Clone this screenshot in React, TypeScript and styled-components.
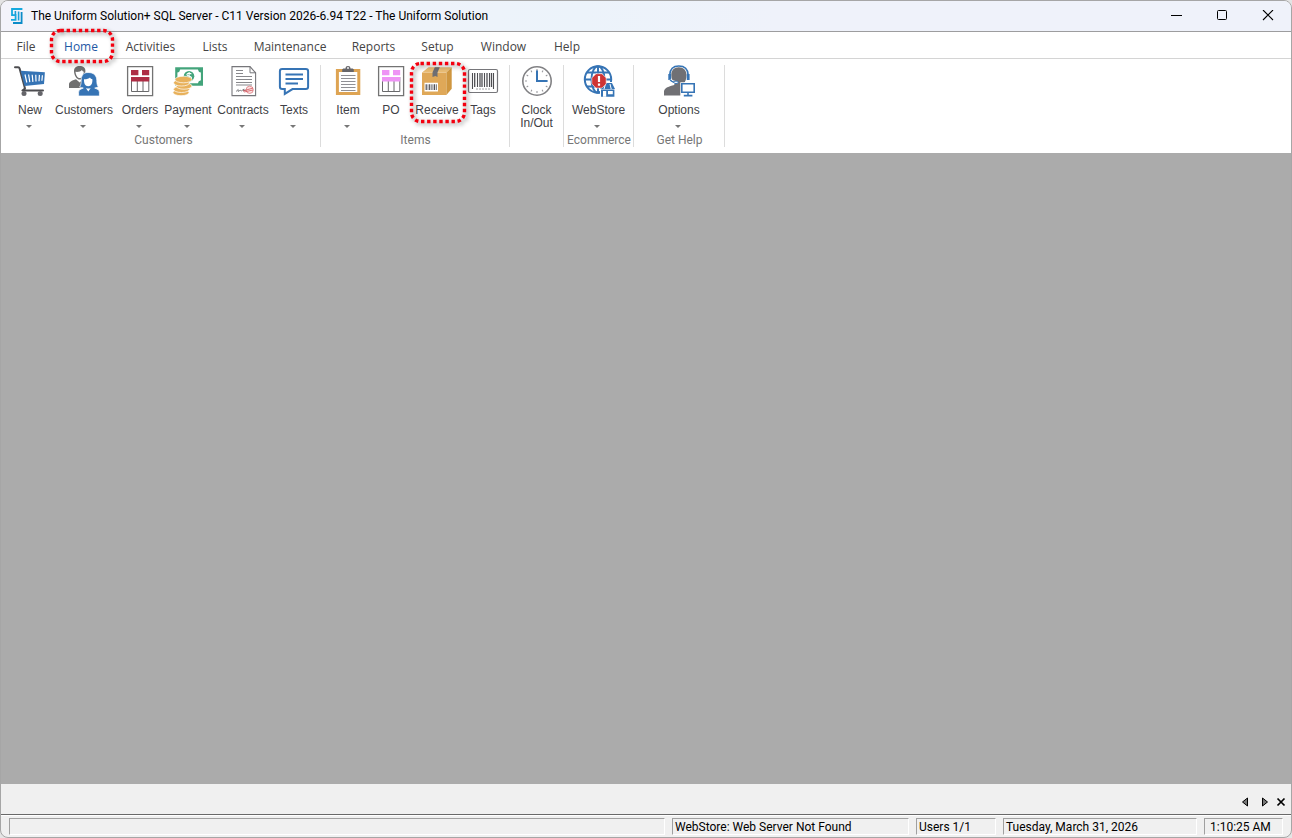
import React from "react";
import styled, { createGlobalStyle } from "styled-components";

const uiFont = `"Open Sans", "Noto Sans", sans-serif`;
const narrowFont = `Roboto, "Open Sans", sans-serif`;

const GlobalStyle = createGlobalStyle`
  *, *::before, *::after { box-sizing: border-box; }
  body { margin: 0; background: #e4e4e4; font-family: ${uiFont}; font-size: 12px; }
  button { margin: 0; padding: 0; border: 0; background: none; color: inherit; font: inherit; }
`;

const Frame = styled.div`
  display: flex;
  flex-direction: column;
  min-height: 100vh;
  border: 1px solid #a6a6a6;
  border-radius: 8px;
  overflow: hidden;
  background: #f0f0f0;
`;

const TitleBar = styled.header`
  display: flex;
  align-items: center;
  height: 31px;
  padding-left: 9px;
  background: linear-gradient(90deg, #f3f3fa, #ecf3fa 45%, #eff2fa 60%);
  border-bottom: 1px solid #9d9d9f;
`;

const Title = styled.h1`
  flex: 1;
  margin: 0 0 0 7px;
  font-family: ${narrowFont};
  font-size: 12px;
  font-weight: 400;
  line-height: 16px;
  color: #000;
  white-space: nowrap;
`;

const CaptionButton = styled.button`
  display: flex;
  align-items: center;
  justify-content: center;
  width: 46px;
  height: 30px;
`;

const MenuBar = styled.nav`
  display: flex;
  height: 27px;
  padding-left: 1px;
  background: #fff;
  border-bottom: 1px solid #d4d4d4;
`;

const MenuTab = styled.button<{ $width: number; $active?: boolean }>`
  position: relative;
  width: ${(p) => p.$width}px;
  height: 30px;
  line-height: 30px;
  white-space: nowrap;
  color: ${(p) => (p.$active ? "#1e58a4" : "#444")};
`;

const Ribbon = styled.section`
  display: flex;
  height: 94px;
  background: #fff;
`;

const Group = styled.div<{ $width: number; $indent?: number }>`
  display: flex;
  flex-direction: column;
  justify-content: space-between;
  width: ${(p) => p.$width}px;
  margin: 6px 0;
  padding-left: ${(p) => p.$indent ?? 0}px;
  border-right: 1px solid #dcdcdc;
`;

const GroupButtons = styled.div`
  display: flex;
  justify-content: center;
`;

const GroupName = styled.div`
  height: 15px;
  line-height: 16px;
  padding-left: 1px;
  text-align: center;
  font-family: ${narrowFont};
  color: #767676;
`;

const Tool = styled.button<{ $width: number }>`
  position: relative;
  display: flex;
  flex-direction: column;
  align-items: center;
  width: ${(p) => p.$width}px;
  font-family: "Liberation Sans", Arial, sans-serif;
  font-size: 12px;
  line-height: 13px;
  color: #3f3f46;
`;

const ToolLabel = styled.span`
  position: relative;
  z-index: 2;
  margin-top: 7px;
  white-space: nowrap;
`;

const DropMark = styled.span`
  margin: 8px 3px 0 0;
  border: 3px solid transparent;
  border-top-color: #777;
  border-bottom: 0;
`;

const CalloutSvg = styled.svg<{ $inset: string }>`
  position: absolute;
  z-index: 1;
  inset: ${(p) => p.$inset};
  overflow: visible;
  pointer-events: none;
  filter: drop-shadow(2px 2px 2px rgba(0, 0, 0, 0.45));
`;

const Workspace = styled.main`
  flex: 1;
  background: #ababab;
`;

const WindowStrip = styled.div`
  display: flex;
  justify-content: flex-end;
  align-items: flex-end;
  height: 31px;
  padding: 0 4px 5px 0;
  background: #f0f0f0;
  border-bottom: 1px solid #696969;
`;

const StripButton = styled.button<{ $width: number }>`
  display: flex;
  align-items: center;
  justify-content: center;
  width: ${(p) => p.$width}px;
  height: 14px;
`;

const StatusBar = styled.footer`
  display: grid;
  grid-template-columns: 1fr 237px 80px 194px 79px;
  gap: 7px;
  padding: 2px 8px;
  border-top: 1px solid #fff;
`;

const StatusCell = styled.div<{ $indent?: number }>`
  height: 17px;
  padding-left: ${(p) => p.$indent ?? 2}px;
  border: 1px solid #a0a0a0;
  border-right-color: #fff;
  border-bottom-color: #fff;
  font-family: ${narrowFont};
  line-height: 16px;
  color: #000;
  white-space: nowrap;
`;

function Callout({ width, height, inset }: { width: number; height: number; inset: string }) {
  return (
    <CalloutSvg $inset={inset} width={width} height={height} aria-hidden="true">
      <rect
        x="1.5"
        y="1.5"
        width={width - 3}
        height={height - 3}
        rx="9"
        fill="none"
        stroke="#f4000f"
        strokeWidth="3.4"
        strokeDasharray="3.4 2.7"
      />
    </CalloutSvg>
  );
}

function Icon({ children }: { children: React.ReactNode }) {
  return (
    <svg width="32" height="32" viewBox="0 0 32 32" fill="none" aria-hidden="true">
      {children}
    </svg>
  );
}

const CartIcon = () => (
  <Icon>
    <path d="M1 2.2h3.2c.8 0 1.2.5 1.4 1.2L11 23.5l-2.6 2H29" stroke="#4d4d50" strokeWidth="2" strokeLinejoin="round" strokeLinecap="round" />
    <path d="M6.6 5.8 30.9 7.2 30 19 10.6 21Z" fill="#3674b5" />
    <path d="m11 9.5 1.8 8M14.6 9.5l1.2 7.7M18.2 9.7l.7 7.2M21.8 9.8l.2 6.8M25.4 9.9 25 16.2M28.4 10.2l-.5 5.6" stroke="#fff" strokeWidth="1.2" />
    <circle cx="10" cy="28.5" r="2.5" fill="#65656a" />
    <circle cx="26.2" cy="28.5" r="2.5" fill="#65656a" />
  </Icon>
);

const CustomersIcon = () => (
  <Icon>
    <path d="M6 6C6 2.8 8.3 1 11.7 1s5.7 1.8 5.7 5c0 4-2.4 8.6-5.7 8.6S6 10 6 6Z" fill="#707070" />
    <path d="M7.5 6.8c2.8.4 5.3-.4 6.5-1.8.4 1 .9 1.5 1.8 1.8-.2 3-1.8 6.3-4.1 6.3S7.8 10 7.5 6.8Z" fill="#fff" />
    <path d="M1 23v-3.5c0-2.6 2.7-3.7 7-5.2l3.7 3.3L14 15v8Z" fill="#707070" />
    <path d="M20 7.5c-5 0-6.8 3.4-6.8 8 0 3-.4 4.7-1.6 6.6l3.7 1c-2 .9-4.7 1.5-4.7 4.4V31h20.8v-3.5c0-2.9-2.6-3.5-4.7-4.4l3.7-1c-1.2-1.9-1.6-3.6-1.6-6.6 0-4.6-2.8-8-8.8-8Z" fill="#3674b5" stroke="#fff" strokeWidth=".7" />
    <path d="M16 14.2c3 0 5-.6 6-1.8.6 1.1 1.2 1.5 2.4 1.8.2 3.8-1 7-4.2 7s-4.4-3.2-4.2-7ZM17.8 23c1.5.8 3.4.8 4.9 0l-2.4 3.6Z" fill="#fff" />
  </Icon>
);

const FormIcon = ({ color }: { color: string }) => (
  <Icon>
    <path d="M3.6 1.6h25v29h-25Z" fill="#fff" stroke="#737373" strokeWidth="1.3" />
    <path d="M7.5 12v14.5h17.3V12M13.3 14v12.5M19 14v12.5" stroke="#69696b" strokeWidth="1" />
    <path d="M7 5h7.4v5.2H7ZM18 5h7.2v5.2H18ZM7 12h18.2v4.5H7Z" fill={color} />
  </Icon>
);

const PaymentIcon = () => (
  <Icon>
    <path d="M3.2 2.2H31v18.6H3.2Z" fill="#43a47b" />
    <path d="M8.2 4.5h17.7a3.5 3.5 0 0 0 3 3v7.7a3.5 3.5 0 0 0-3 3H8.4a3.5 3.5 0 0 0-3-3V7.5a3.5 3.5 0 0 0 2.8-3Z" fill="#fff" />
    <circle cx="17" cy="11.3" r="5.3" fill="#43a47b" />
    <path d="M19.3 9.2c-.5-1.1-4.4-1.4-4.4.5 0 1.7 4.6 1 4.6 3.1 0 2-4.2 1.7-4.8.4M17.1 7v8.7" stroke="#fff" strokeWidth="1.1" />
    <g fill="#e8b15b" stroke="#fff" strokeWidth=".7">
      <ellipse cx="9" cy="27.5" rx="8" ry="3.2" />
      <ellipse cx="9.5" cy="24.3" rx="8" ry="3.2" />
      <ellipse cx="12" cy="21" rx="8" ry="3.2" />
      <ellipse cx="9.5" cy="17.8" rx="8" ry="3.2" />
      <ellipse cx="11.5" cy="14.5" rx="8.5" ry="3.3" />
    </g>
  </Icon>
);

const ContractIcon = () => (
  <Icon>
    <path d="M5 1.6h18l5.6 6.2v22.8H5Z" fill="#fff" stroke="#76767a" strokeWidth="1.1" />
    <path d="M23 1.6v6.2h5.6" stroke="#76767a" />
    <path d="M9 5.5h7M9 8.5h7M9 11.5h16M9 14.5h16M9 17.5h16M9 20h16" stroke="#88888c" strokeWidth="1.2" />
    <path d="m9 26.5 2.2-2v2l2-1.3 1 .8 3-2-1 2 3-1 4 .5" stroke="#77777b" strokeWidth=".9" />
    <circle cx="22.7" cy="24.8" r="3.6" fill="#fbe2e2" stroke="#dc7b80" strokeWidth=".8" />
    <path d="m16 26 10-3M17 27l9-2" stroke="#d6545c" strokeWidth=".8" />
  </Icon>
);

const TextsIcon = () => (
  <Icon>
    <path d="M4.2 3.9h23.6c1.3 0 2.3 1 2.3 2.3v15.6c0 1.3-1 2.3-2.3 2.3H14.5l-7.7 4.8v-4.8H4.2c-1.3 0-2.3-1-2.3-2.3V6.2c0-1.3 1-2.3 2.3-2.3Z" fill="#fff" stroke="#3674b5" strokeWidth="2" />
    <path d="M7.5 9.5H25M7.5 14H25M7.5 18.5H20" stroke="#3674b5" strokeWidth="2" />
  </Icon>
);

const ClipboardIcon = () => (
  <Icon>
    <path d="M5.4 5.4h21.4v23.2H5.4Z" fill="#fff" stroke="#dea453" strokeWidth="3" />
    <path d="M9 10.5h14.5M9 13.5h14.5M9 16.5h14.5M9 19.5h14.5M9 22.5h14.5M9 25.5h14.5" stroke="#909095" strokeWidth="1.1" />
    <path d="M10.2 7V5c0-1 .7-1.5 1.8-1.5h1.5C13.5 1.8 14.5 1 16 1s2.5.8 2.5 2.5H20c1.1 0 1.8.5 1.8 1.5v2Z" fill="#66666a" />
    <circle cx="16" cy="3" r=".9" fill="#fff" />
  </Icon>
);

const BoxIcon = () => (
  <Icon>
    <path d="M1 7.4h24.4V30H1Z" fill="#dfa858" />
    <path d="M1 7.4 7.5 2.2h23.2l-5.3 5.2Z" fill="#e9bc75" />
    <path d="m25.4 7.4 5.3-5.2v21.5L25.4 30Z" fill="#cf963f" />
    <path d="M13.8 2.2h5l-2.3 5.2v4.6l-2.1-1-2.9 1V7.4Z" fill="#6e6e73" />
    <path d="M3.5 17.8H17v8.7H3.5Z" fill="#fff" />
    <path d="M5.2 19.3v5.7M8.7 19.3v5.7M13.6 19.3v5.7" stroke="#515156" strokeWidth="1.2" />
    <path d="M7 19.3v5.7M10.7 19.3v5.7M12 19.3v5.7M15.5 19.3v5.7" stroke="#515156" strokeWidth=".7" />
  </Icon>
);

const BarcodeIcon = () => (
  <Icon>
    <rect x="1.5" y="4.5" width="29" height="23" rx="1.5" fill="#fff" stroke="#76767a" strokeWidth="1.2" />
    <path d="M5.5 8v16M10.5 8v14M17.5 8v14M22.5 8v14M26.5 8v16" stroke="#4e4e52" strokeWidth="1.1" />
    <path d="M7.7 8v14M13 8v14M15 8v14M20 8v14M24.5 8v14" stroke="#4e4e52" strokeWidth="1.3" />
    <path d="M9 24h14" stroke="#a2a2a5" strokeWidth="1" strokeDasharray="2 1" />
  </Icon>
);

const ClockIcon = () => (
  <Icon>
    <circle cx="16" cy="16" r="14.2" fill="#fff" stroke="#818184" strokeWidth="1.6" />
    <path d="M16 4v2M16 26v2M4 16h2M10 5.6l.9 1.6M5.6 10l1.6.9M5.6 22l1.6-.9M10 26.4l.9-1.6M22 26.4l-.9-1.6M26.4 22l-1.6-.9M26.4 10l-1.6.9M22 5.6l-.9 1.6" stroke="#9a9a9e" strokeWidth="1.1" />
    <path d="M16 5.5V16h10.6" stroke="#3674b5" strokeWidth="2" />
  </Icon>
);

const WebStoreIcon = () => (
  <Icon>
    <g stroke="#3674b5" strokeWidth="2">
      <circle cx="15" cy="14.5" r="13.2" />
      <ellipse cx="15" cy="14.5" rx="6.5" ry="13.2" />
      <path d="M2 14.5h26M4 7.5h22M4 21.5h22M15 1.3v26" />
    </g>
    <path d="M16 24.6 19.5 17h9.5l3 7.6V32H17v-7.4Z" fill="#fff" />
    <path d="m17 24 3.5-6h8.5l3 6ZM18 24.5h13.4v7.3H18Z" fill="#3674b5" />
    <path d="m22.5 19-1.5 5M27 19l1.2 5" stroke="#fff" strokeWidth="1" />
    <path d="M20 26h3.2v5.8H20ZM25 26h4.8v3.2H25Z" fill="#fff" />
    <path d="M13 8.7h6l4.2 4.2v6l-4.2 4.2h-6l-4.2-4.2v-6Z" fill="#cf3434" stroke="#fff" strokeWidth=".6" />
    <path d="M16 11v6M16 18.6v2.2" stroke="#fff" strokeWidth="2.2" />
  </Icon>
);

const SupportIcon = () => (
  <Icon>
    <path d="M8.3 10c0-4.8 2.9-7.7 7.5-7.7s7.7 2.9 7.7 7.7c0 4-1 7-3.3 9l.3 2c3.5 1.4 8 2 8.6 5.6v3.8H1v-4.2C1.6 22.7 6 21.5 11.3 20v-2C9.2 16 8.3 13.5 8.3 10Z" fill="#707074" />
    <path d="M6.7 10C7 4.5 10 1 15.8 1S24.9 4.5 25.2 10" stroke="#3674b5" strokeWidth="1.6" />
    <path d="M6.7 9v6M25.2 9v6" stroke="#3674b5" strokeWidth="2.8" />
    <path d="M7 14.5c1 2 2.8 2.8 5.5 3" stroke="#fff" strokeWidth="3" />
    <path d="M7 14.5c1 2 2.8 2.8 5.5 3" stroke="#3674b5" strokeWidth="1.4" />
    <ellipse cx="13" cy="17.3" rx="2.2" ry="1.2" fill="#fff" stroke="#3674b5" />
    <path d="M17.3 17.3H32V32H17.3Z" fill="#fff" />
    <path d="M18.8 18.8h12.4v8.4H18.8ZM25 27.2v2.6M20.8 30.6h8.6" stroke="#3674b5" strokeWidth="1.6" />
  </Icon>
);

const AppLogo = () => (
  <svg width="14" height="18" viewBox="0 0 14 18" fill="none" aria-hidden="true">
    <path d="M12.4 2H2v6.2h3.6v4.6H1" stroke="#16a9de" strokeWidth="1.8" />
    <path d="M3 16h8.6V5" stroke="#0c8cc8" strokeWidth="1.8" />
    <path d="M5.4 4v4M8.6 4.6v9" stroke="#1c9fd8" strokeWidth="1.6" />
  </svg>
);

type ToolSpec = { label: React.ReactNode; icon: React.ReactNode; width: number; menu?: boolean; marked?: boolean };

const groups: { name: string; width: number; indent?: number; tools: ToolSpec[] }[] = [
  {
    name: "Customers",
    width: 320,
    indent: 5,
    tools: [
      { label: "New", icon: <CartIcon />, width: 40, menu: true },
      { label: "Customers", icon: <CustomersIcon />, width: 68, menu: true },
      { label: "Orders", icon: <FormIcon color="#ad2c44" />, width: 44, menu: true },
      { label: "Payment", icon: <PaymentIcon />, width: 52, menu: true },
      { label: "Contracts", icon: <ContractIcon />, width: 58, menu: true },
      { label: "Texts", icon: <TextsIcon />, width: 44, menu: true },
    ],
  },
  {
    name: "Items",
    width: 189,
    tools: [
      { label: "Item", icon: <ClipboardIcon />, width: 44, menu: true },
      { label: "PO", icon: <FormIcon color="#ee93f5" />, width: 42 },
      { label: "Receive", icon: <BoxIcon />, width: 50, marked: true },
      { label: "Tags", icon: <BarcodeIcon />, width: 42 },
    ],
  },
  { name: "", width: 54, tools: [{ label: <>Clock<br />In/Out</>, icon: <ClockIcon />, width: 50 }] },
  { name: "Ecommerce", width: 70, tools: [{ label: "WebStore", icon: <WebStoreIcon />, width: 66, menu: true }] },
  { name: "Get Help", width: 91, tools: [{ label: "Options", icon: <SupportIcon />, width: 66, menu: true }] },
];

const tabs: [string, number][] = [
  ["File", 48],
  ["Home", 62],
  ["Activities", 77],
  ["Lists", 52],
  ["Maintenance", 98],
  ["Reports", 69],
  ["Setup", 59],
  ["Window", 73],
  ["Help", 54],
];

export default function App() {
  return (
    <>
      <GlobalStyle />
      <Frame>
        <TitleBar>
          <AppLogo />
          <Title>The Uniform Solution+ SQL Server - C11 Version 2026-6.94 T22 - The Uniform Solution</Title>
          <CaptionButton aria-label="Minimize">
            <svg width="12" height="12" stroke="#000"><path d="M1 5.5h11" /></svg>
          </CaptionButton>
          <CaptionButton aria-label="Maximize">
            <svg width="12" height="12" fill="none" stroke="#000"><rect x="1.5" y="0.5" width="9" height="9" rx="1" /></svg>
          </CaptionButton>
          <CaptionButton aria-label="Close">
            <svg width="12" height="12" stroke="#000" strokeWidth="1.1"><path d="m1 0 10 10M11 0 1 10" /></svg>
          </CaptionButton>
        </TitleBar>
        <MenuBar>
          {tabs.map(([name, width]) => (
            <MenuTab key={name} $width={width} $active={name === "Home"}>
              {name}
              {name === "Home" && <Callout width={64} height={34} inset="-3px auto auto 0" />}
            </MenuTab>
          ))}
        </MenuBar>
        <Ribbon>
          {groups.map((group, i) => (
            <Group key={i} $width={group.width} $indent={group.indent}>
              <GroupButtons>
                {group.tools.map((tool, j) => (
                  <Tool key={j} $width={tool.width}>
                    {tool.icon}
                    <ToolLabel>{tool.label}</ToolLabel>
                    {tool.menu && <DropMark />}
                    {tool.marked && <Callout width={56} height={61} inset="-3px auto auto -2px" />}
                  </Tool>
                ))}
              </GroupButtons>
              <GroupName>{group.name}</GroupName>
            </Group>
          ))}
        </Ribbon>
        <Workspace />
        <WindowStrip>
          <StripButton $width={20} aria-label="Previous window">
            <svg width="8" height="10"><path d="M6.5 1v8L1.5 5Z" fill="#777" stroke="#000" /></svg>
          </StripButton>
          <StripButton $width={20} aria-label="Next window">
            <svg width="8" height="10"><path d="M1.5 1v8l5-4Z" fill="#777" stroke="#000" /></svg>
          </StripButton>
          <StripButton $width={12} aria-label="Close window">
            <svg width="10" height="10" stroke="#000" strokeWidth="1.7"><path d="m1.5 1.5 7 7M8.5 1.5l-7 7" /></svg>
          </StripButton>
        </WindowStrip>
        <StatusBar>
          <StatusCell />
          <StatusCell>WebStore: Web Server Not Found</StatusCell>
          <StatusCell>Users 1/1</StatusCell>
          <StatusCell>Tuesday, March 31, 2026</StatusCell>
          <StatusCell $indent={5}>1:10:25 AM</StatusCell>
        </StatusBar>
      </Frame>
    </>
  );
}
